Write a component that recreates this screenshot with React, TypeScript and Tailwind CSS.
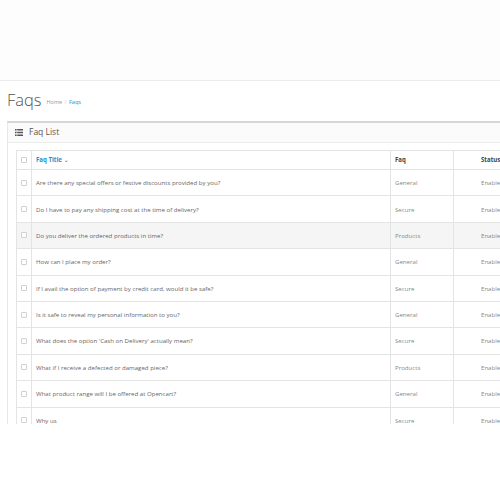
const rows: { title: string; faq: string }[] = [
  { title: "Are there any special offers or festive discounts provided by you?", faq: "General" },
  { title: "Do I have to pay any shipping cost at the time of delivery?", faq: "Secure" },
  { title: "Do you deliver the ordered products in time?", faq: "Products" },
  { title: "How can I place my order?", faq: "General" },
  { title: "If I avail the option of payment by credit card, would it be safe?", faq: "Secure" },
  { title: "Is it safe to reveal my personal information to you?", faq: "General" },
  { title: "What does the option 'Cash on Delivery' actually mean?", faq: "Secure" },
  { title: "What if I receive a defected or damaged piece?", faq: "Products" },
  { title: "What product range will I be offered at Opencart?", faq: "General" },
  { title: "Why us", faq: "Secure" },
];

function ListIcon() {
  return (
    <svg width="8" height="7" viewBox="0 0 8 7" className="text-[#555]">
      <g fill="currentColor">
        <rect x="0" y="0" width="1.6" height="1.5" />
        <rect x="2.2" y="0" width="5.8" height="1.5" />
        <rect x="0" y="2.75" width="1.6" height="1.5" />
        <rect x="2.2" y="2.75" width="5.8" height="1.5" />
        <rect x="0" y="5.5" width="1.6" height="1.5" />
        <rect x="2.2" y="5.5" width="5.8" height="1.5" />
      </g>
    </svg>
  );
}

function Checkbox() {
  return <span className="block w-[6px] h-[6px] border border-[#d0d0d0] rounded-[1px] bg-white mx-auto" />;
}

export default function App() {
  return (
    <div className="w-[500px] h-[500px] bg-white overflow-hidden" style={{ fontFamily: '"Open Sans", sans-serif' }}>
      <div className="h-[81px] bg-[#fdfdfd] border-b border-[#ececec]" />
      <div className="h-[343px] overflow-hidden">
        <div className="flex items-end gap-[5px] pl-[7px] pt-[8px] h-[27px]">
          <h1 className="text-[16.5px] leading-none text-[#555] font-light">Faqs</h1>
          <div className="text-[5.5px] text-[#999] pb-[2px]">
            Home <span className="mx-[1px] text-[#ccc]">/</span> <span className="text-[#1e91cf]">Faqs</span>
          </div>
        </div>
        <div className="ml-[7px] mt-[13px] border-t-2 border-[#d6d6d6] border-l border-l-[#e8e8e8]">
          <div className="h-[20px] flex items-center gap-[6px] pl-[7px] bg-[#fbfbfb] border-b border-[#ececec]">
            <ListIcon />
            <span className="text-[8.5px] text-[#555]">Faq List</span>
          </div>
          <div className="pl-[8px] pt-[7px]">
            <table className="w-[550px] border-collapse table-fixed text-[6.1px] text-[#666]">
              <colgroup>
                <col className="w-[15px]" />
                <col className="w-[359px]" />
                <col className="w-[63px]" />
                <col />
              </colgroup>
              <thead>
                <tr className="h-[19px]">
                  <td className="border border-[#e4e4e4]"><Checkbox /></td>
                  <td className="border border-[#e4e4e4] pl-[4px] font-bold text-[#1e91cf]">
                    Faq Title <span className="inline-block text-[5px]">&#8964;</span>
                  </td>
                  <td className="border border-[#e4e4e4] pl-[4px] font-bold text-[#444]">Faq</td>
                  <td className="border border-[#e4e4e4] pl-[27px] font-bold text-[#444]">Status</td>
                </tr>
              </thead>
              <tbody>
                {rows.map((r, i) => (
                  <tr key={i} className={`h-[26.4px] ${i === 2 ? "bg-[#f5f5f5]" : ""}`}>
                    <td className="border border-[#e4e4e4]"><Checkbox /></td>
                    <td className="border border-[#e4e4e4] pl-[4px] whitespace-nowrap">{r.title}</td>
                    <td className="border border-[#e4e4e4] pl-[4px] text-[#888]">{r.faq}</td>
                    <td className="border border-[#e4e4e4] pl-[27px] text-[#888]">Enable</td>
                  </tr>
                ))}
              </tbody>
            </table>
          </div>
        </div>
      </div>
    </div>
  );
}
